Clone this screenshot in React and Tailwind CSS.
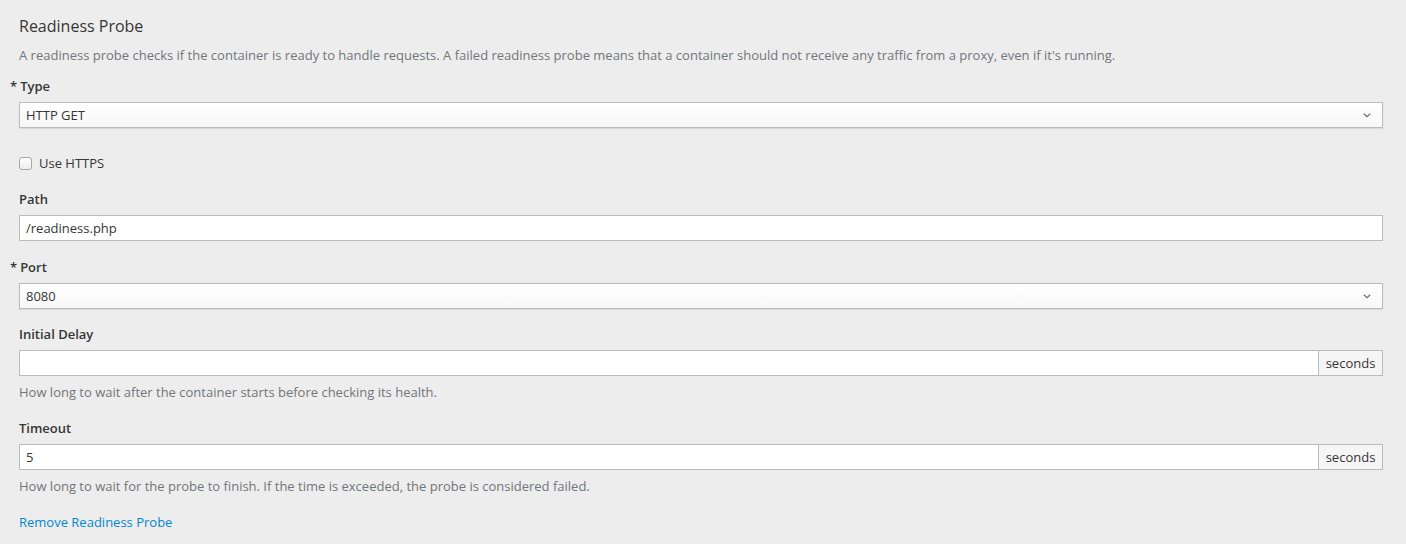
import React from "react";

// Readiness probe form (PatternFly-ish look)
function Label({ children, required }) {
  return (
    <div className="mb-[7px] flex items-center text-[13px] font-semibold leading-[17px] text-[#363636]">
      {required && <span className="-ml-[9px] mr-[3px]">*</span>}
      {children}
    </div>
  );
}

function Select({ value }) {
  return (
    <div className="flex h-[26px] items-center justify-between border border-[#bbb] bg-gradient-to-b from-white to-[#f7f7f7] pl-[6px] pr-[11px] pt-[1px] text-[13px] text-[#363636] shadow-[0_1px_1px_rgba(3,3,3,0.08)]">
      <span>{value}</span>
      <svg width="8" height="5" viewBox="0 0 8 5" className="text-[#6a6e73]">
        <path d="M0.8 0.8l3.2 3L7.2 0.8" fill="none" stroke="currentColor" strokeWidth="1.2" />
      </svg>
    </div>
  );
}

function Input({ value, addon }) {
  return (
    <div className="flex h-[26px]">
      <div className="flex flex-1 items-center border border-[#bbb] bg-white px-[6px] pt-[1px] text-[13px] text-[#363636]">
        {value}
      </div>
      {addon && (
        <div className="flex w-[64px] items-center justify-center border border-l-0 border-[#bbb] bg-[#f5f5f5] pt-[1px] text-[13px] text-[#363636]">
          {addon}
        </div>
      )}
    </div>
  );
}

function Help({ children }) {
  return (
    <div className="mt-[8px] text-[13px] leading-[17px] text-[#72767b]">{children}</div>
  );
}

export default function App() {
  return (
    <div
      className="h-[544px] w-[1406px] overflow-hidden bg-[#ededed] pl-[19px] pr-[23px] pt-[16px]"
      style={{ fontFamily: '"Open Sans", "Noto Sans", sans-serif' }}
    >
      <h2 className="text-[16px] leading-[20px] text-[#363636]">Readiness Probe</h2>
      <p className="mt-[11px] text-[13px] leading-[17px] text-[#72767b]">
        A readiness probe checks if the container is ready to handle requests. A failed readiness
        probe means that a container should not receive any traffic from a proxy, even if it's
        running.
      </p>

      {/* Type */}
      <div className="mt-[14px]">
        <Label required>Type</Label>
        <Select value="HTTP GET" />
      </div>

      {/* HTTPS */}
      <div className="mt-[27px] flex items-center gap-[7px] text-[13px] leading-[17px] text-[#363636]">
        <span className="h-[13px] w-[13px] rounded-[3px] border border-[#a8a8a8] bg-gradient-to-b from-white to-[#ededed]" />
        <span>Use HTTPS</span>
      </div>

      {/* Path */}
      <div className="mt-[19px]">
        <Label>Path</Label>
        <Input value="/readiness.php" />
      </div>

      {/* Port */}
      <div className="mt-[18px]">
        <Label required>Port</Label>
        <Select value="8080" />
      </div>

      {/* Initial delay */}
      <div className="mt-[17px]">
        <Label>Initial Delay</Label>
        <Input value="" addon="seconds" />
        <Help>How long to wait after the container starts before checking its health.</Help>
      </div>

      {/* Timeout */}
      <div className="mt-[19px]">
        <Label>Timeout</Label>
        <Input value="5" addon="seconds" />
        <Help>
          How long to wait for the probe to finish. If the time is exceeded, the probe is
          considered failed.
        </Help>
      </div>

      <div className="mt-[19px] text-[13px] leading-[17px]">
        <a href="#" className="text-[#0088ce]">
          Remove Readiness Probe
        </a>
      </div>
    </div>
  );
}
